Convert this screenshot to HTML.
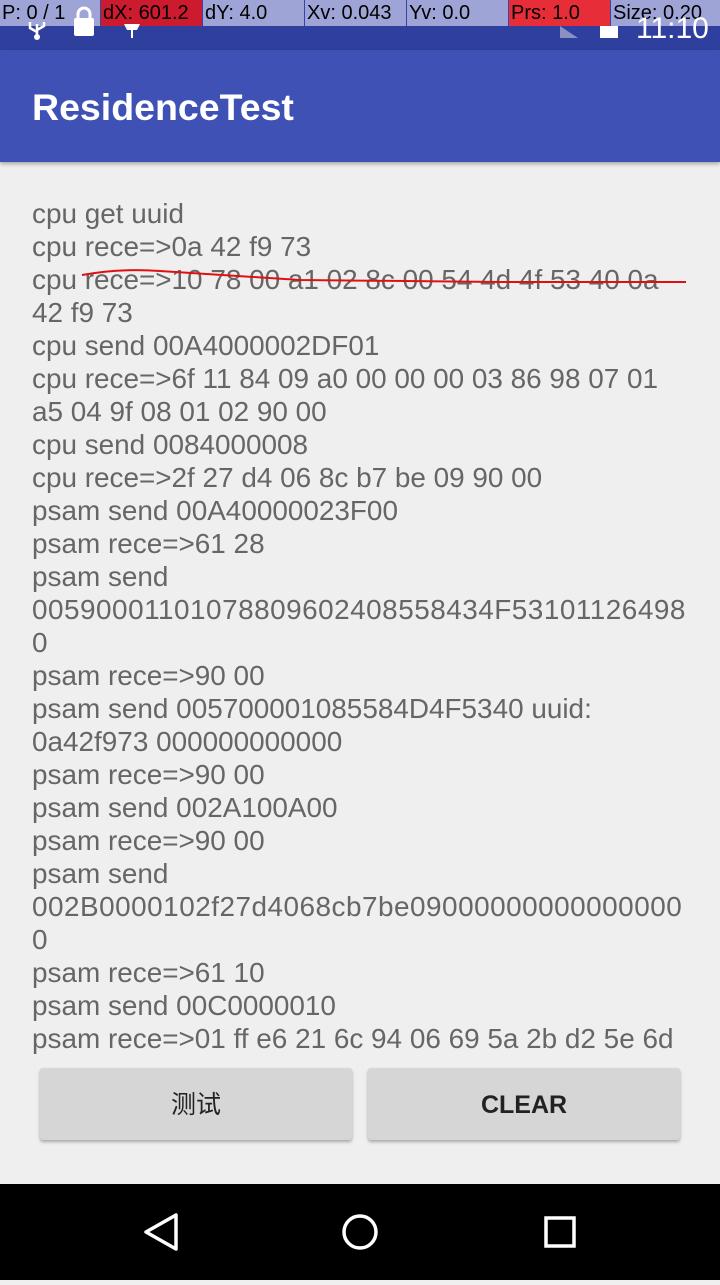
<!DOCTYPE html>
<html><head><meta charset="utf-8"><style>
body{margin:0;width:720px;height:1280px;background:#efefef;font-family:"Liberation Sans","Noto Sans CJK SC",sans-serif;position:relative;overflow:hidden}
.sb{position:absolute;top:0;left:0;width:720px;height:50px;background:#2f3f9e}
.ov{position:absolute;top:0;height:26px;font-size:20px;line-height:26px;color:#000;white-space:nowrap;overflow:hidden;border-right:1px solid #3344aa;box-sizing:border-box;padding-left:2px}
.ab{position:absolute;top:50px;left:0;width:720px;height:112px;background:#3f51b5;box-shadow:0 2px 4px rgba(0,0,0,.3)}
.ab span{position:absolute;left:32px;top:36px;color:#fff;font-size:37.5px;font-weight:bold}
.txt{position:absolute;left:32px;top:197px;font-size:27.9px;line-height:33px;color:#666;white-space:pre}
.ls{letter-spacing:0.5px}
.btn{position:absolute;top:1068px;height:72px;background:#d6d6d6;border-radius:3px;box-shadow:0 2px 3px rgba(0,0,0,.3);font-size:25px;color:#222;text-align:center;line-height:74px}
.nav{position:absolute;top:1184px;left:0;width:720px;height:96px;background:#000}
</style></head><body>
<div class="sb"></div>
<div class="ov" style="left:0;width:101px;background:#9ea5d6">P: 0 / 1</div>
<div class="ov" style="left:101px;width:102px;background:#cc1a2e">dX: 601.2</div>
<div class="ov" style="left:203px;width:102px;background:#9ea5d6">dY: 4.0</div>
<div class="ov" style="left:305px;width:102px;background:#9ea5d6">Xv: 0.043</div>
<div class="ov" style="left:407px;width:102px;background:#9ea5d6">Yv: 0.0</div>
<div class="ov" style="left:509px;width:102px;background:#e62d38">Prs: 1.0</div>
<div class="ov" style="left:611px;width:109px;background:#9ea5d6;border:none">Size: 0.20</div>
<div style="position:absolute;left:636px;top:12px;color:#fff;font-size:30px">11:10</div>
<svg style="position:absolute;left:0;top:0" width="720" height="50">
<rect x="74" y="18" width="20" height="18" rx="2" fill="#fff"/><path d="M78 18v-4a6 6 0 0 1 12 0v4" stroke="#fff" stroke-width="3" fill="none"/>
<path d="M37 24v12M30 22v6l7 4M44 22v4l-7 4" stroke="#fff" stroke-width="2.5" fill="none"/><circle cx="37" cy="37" r="3" fill="#fff"/>
<path d="M124 24h16l-3 6h-10z" fill="#fff"/><rect x="131" y="30" width="2" height="8" fill="#fff"/>
<path d="M560 26l18 12h-18z" fill="#8a90c4"/><rect x="600" y="26" width="18" height="12" fill="#fff"/>
</svg>
<div class="ab"><span>ResidenceTest</span></div>
<div class="txt">cpu get uuid
cpu rece=&gt;0a 42 f9 73
cpu rece=&gt;10 78 00 a1 02 8c 00 54 4d 4f 53 40 0a
42 f9 73
cpu send 00A4000002DF01
cpu rece=&gt;6f 11 84 09 a0 00 00 00 03 86 98 07 01
a5 04 9f 08 01 02 90 00
cpu send 0084000008
cpu rece=&gt;2f 27 d4 06 8c b7 be 09 90 00
psam send 00A40000023F00
psam rece=&gt;61 28
psam send
<span class="ls">00590001101078809602408558434F53101126498</span>
0
psam rece=&gt;90 00
psam send 005700001085584D4F5340 uuid:
0a42f973 000000000000
psam rece=&gt;90 00
psam send 002A100A00
psam rece=&gt;90 00
psam send
<span class="ls">002B0000102f27d4068cb7be09000000000000000</span>
0
psam rece=&gt;61 10
psam send 00C0000010
psam rece=&gt;01 ff e6 21 6c 94 06 69 5a 2b d2 5e 6d</div>
<svg style="position:absolute;left:0;top:260px" width="720" height="30"><path d="M82 15 Q120 8 160 11 L300 20 L500 22 L686 22" stroke="#e01010" stroke-width="2" fill="none"/></svg>
<div class="btn" style="left:40px;width:312px">测试</div>
<div class="btn" style="left:368px;width:312px;font-weight:bold">CLEAR</div>
<div class="nav"><svg width="720" height="96">
<path d="M176 31 L176 65 L146 48 Z" stroke="#fff" stroke-width="3.5" fill="none" stroke-linejoin="round"/>
<circle cx="360" cy="48" r="16" stroke="#fff" stroke-width="3.5" fill="none"/>
<rect x="546" y="34" width="28" height="28" stroke="#fff" stroke-width="3.5" fill="none"/>
</svg></div>
</body></html>
